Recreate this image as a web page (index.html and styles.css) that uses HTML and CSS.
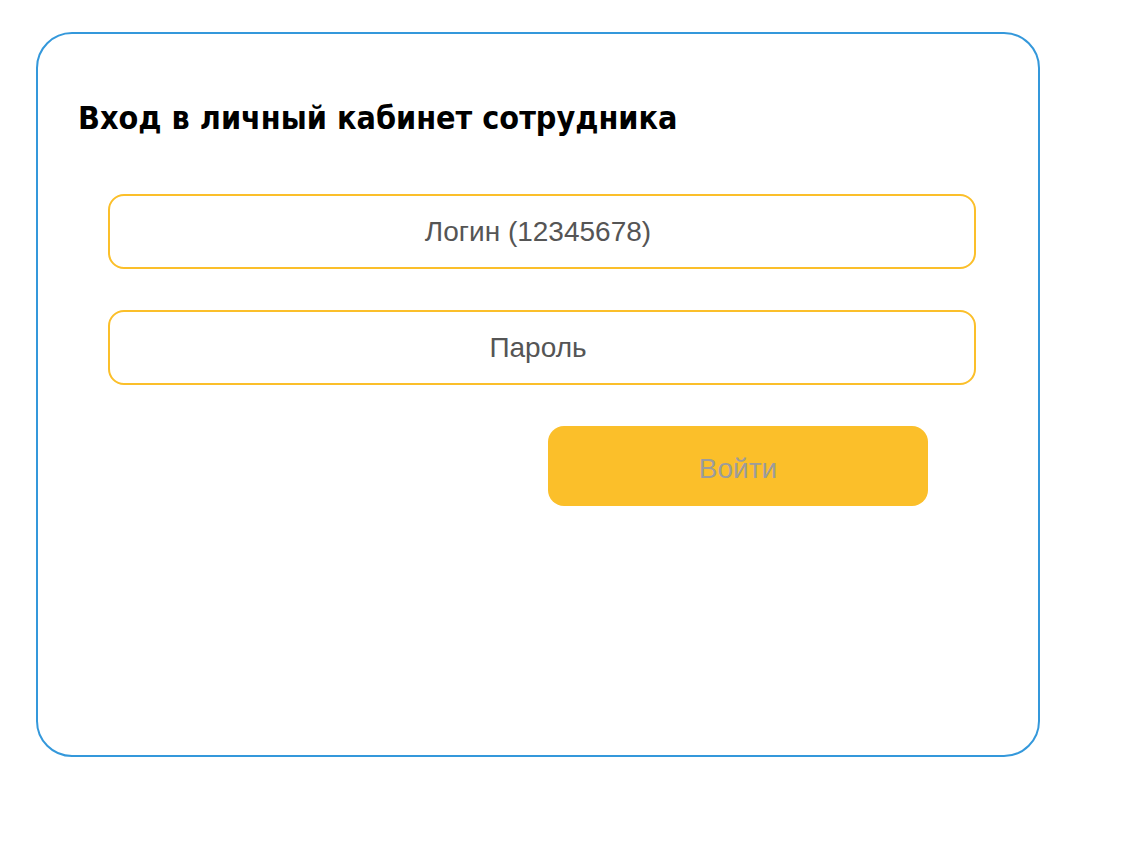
FILE: index.html
```html
<!DOCTYPE html>
<html lang="ru">
<head>
<meta charset="utf-8">
<title>Вход</title>
<link rel="stylesheet" href="styles.css">
</head>
<body>
<div class="card">
  <h1 class="title">Вход в личный кабинет сотрудника</h1>
  <form class="form">
    <input class="field" type="text" placeholder="Логин (12345678)">
    <input class="field" type="password" placeholder="Пароль">
    <div class="actions">
      <button class="submit" type="button">Войти</button>
    </div>
  </form>
</div>
</body>
</html>
```
FILE: styles.css
```css
html, body {
  margin: 0;
  padding: 0;
  background: #fff;
}
body {
  padding: 32px 0 0 36px;
}
.card {
  box-sizing: border-box;
  width: 1004px;
  height: 725px;
  border: 2px solid #3498db;
  border-radius: 36px;
  padding: 67px 0 0 40px;
}
.title {
  margin: 0;
  font-family: "DejaVu Sans Condensed", "DejaVu Sans", Verdana, sans-serif;
  font-stretch: condensed;
  font-weight: bold;
  font-size: 32px;
  line-height: 34px;
  color: #000;
}
.form {
  margin: 59px 0 0 30px;
  display: flex;
  flex-direction: column;
  gap: 41px;
}
.field {
  box-sizing: border-box;
  width: 868px;
  height: 75px;
  border: 2px solid #fbbf2a;
  border-radius: 16px;
  background: #fff;
  text-align: center;
  font-family: "Liberation Sans", Arial, sans-serif;
  font-size: 28px;
  color: #555;
  padding: 0 8px 0 0;
  outline: none;
}
.field::placeholder {
  color: #555;
  opacity: 1;
}
.actions {
  display: flex;
  padding-left: 440px;
}
.submit {
  width: 380px;
  height: 80px;
  border: none;
  border-radius: 16px;
  background: #fbbf2a;
  color: #9c9c9c;
  font-family: "Liberation Sans", Arial, sans-serif;
  font-size: 28px;
  padding: 6px 0 0;
  cursor: pointer;
}
```
